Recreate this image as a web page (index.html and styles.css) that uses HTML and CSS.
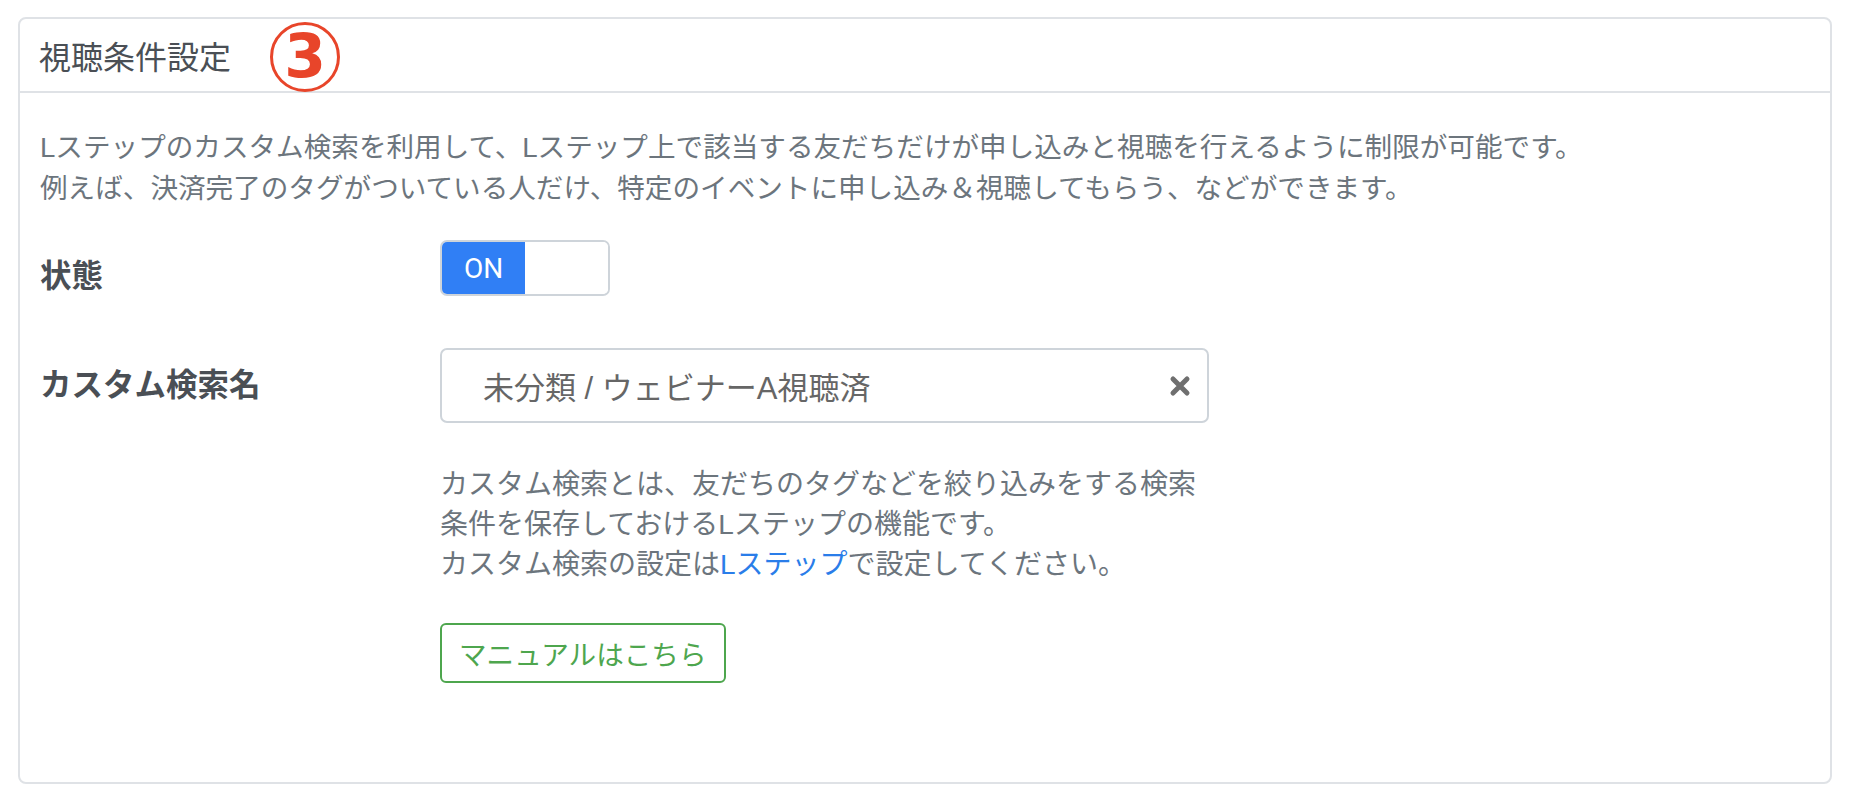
FILE: index.html
```html
<!DOCTYPE html>
<html lang="ja">
<head>
<meta charset="UTF-8"/>
<title>視聴条件設定</title>
<link rel="stylesheet" href="styles.css">
</head>
<body>
<div class="card">
	<div class="cardHeader">
		<span class="cardTitle">視聴条件設定</span>
		<span class="stepMark">3</span>
	</div>
	<div class="cardBody">
		<p class="lead">Lステップのカスタム検索を利用して、Lステップ上で該当する友だちだけが申し込みと視聴を行えるように制限が可能です。<br/>例えば、決済完了のタグがついている人だけ、特定のイベントに申し込み＆視聴してもらう、などができます。</p>

		<div class="formRow stateRow">
			<label class="fieldLabel">状態</label>
			<div class="fieldControl">
				<div class="toggle"><span class="toggleOn">ON</span><span class="toggleOff"></span></div>
			</div>
		</div>

		<div class="formRow searchRow">
			<label class="fieldLabel">カスタム検索名</label>
			<div class="fieldControl">
				<div class="selectBox">
					<span class="selectValue">未分類 / ウェビナーA視聴済</span>
					<svg class="clearIcon" width="22" height="22" viewBox="0 0 22 22"><path d="M4 4 L18 18 M18 4 L4 18" stroke="#6f6f6f" stroke-width="5" stroke-linecap="round" fill="none"/></svg>
				</div>
				<p class="helpText">カスタム検索とは、友だちのタグなどを絞り込みをする検索<br/>条件を保存しておけるLステップの機能です。<br/>カスタム検索の設定は<a href="#">Lステップ</a>で設定してください。</p>
				<a class="manualButton" href="#">マニュアルはこちら</a>
			</div>
		</div>
	</div>
</div>
</body>
</html>
```

FILE: styles.css
```css
html, body { margin: 0; background: #fff; }
body {
	padding: 17px 30px 0 18px;
	font-family: "Liberation Sans", "Noto Sans CJK JP", sans-serif;
	font-size: 27.6px;
	color: #495057;
}
.card {
	box-sizing: border-box;
	width: 1814px;
	height: 767px;
	border: 2px solid #dfe2e6;
	border-radius: 8px;
}
.cardHeader {
	position: relative;
	box-sizing: border-box;
	height: 74px;
	display: flex;
	align-items: center;
	padding: 0 19px;
	border-bottom: 2px solid #dfe2e6;
}
.cardTitle { font-size: 32px; color: #4a4f55; }
.stepMark {
	position: absolute;
	left: 250px;
	top: 3px;
	box-sizing: border-box;
	width: 70px;
	height: 70px;
	border: 3px solid #e8452a;
	border-radius: 50%;
	display: flex;
	align-items: center;
	justify-content: center;
	font-family: "DejaVu Sans", sans-serif;
	font-weight: bold;
	font-size: 60px;
	color: #e8452a;
	line-height: 1;
	padding-bottom: 2px;
}
.cardBody { padding: 34px 20px 30px; }
.lead {
	margin: 0;
	line-height: 41px;
	color: #6c757d;
}
.formRow { display: flex; }
.fieldLabel {
	width: 400px;
	flex: none;
	font-size: 31.5px;
	font-weight: bold;
	line-height: 41px;
	color: #4a4f55;
}
.stateRow { margin-top: 31px; }
.stateRow .fieldLabel { padding-top: 16px; }
.searchRow { margin-top: 51px; }
.searchRow .fieldLabel { padding-top: 17px; }

.toggle {
	box-sizing: border-box;
	width: 170px;
	height: 56px;
	display: flex;
	border: 2px solid #ced4da;
	border-radius: 7px;
	overflow: hidden;
}
.toggleOn {
	width: 83px;
	background: #307ff5;
	color: #fff;
	display: flex;
	align-items: center;
	justify-content: center;
	font-family: "Roboto", "Liberation Sans", sans-serif;
	font-size: 28px;
}
.toggleOff { flex: 1; background: #fff; }

.selectBox {
	box-sizing: border-box;
	width: 769px;
	height: 75px;
	border: 2px solid #ced4da;
	border-radius: 7px;
	display: flex;
	align-items: center;
	padding: 0 16px 0 41px;
}
.selectValue { flex: 1; font-size: 31px; color: #666; }
.clearIcon { flex: none; }

.helpText {
	margin: 42px 0 0;
	font-size: 28px;
	line-height: 40px;
	color: #6c757d;
}
.helpText a { color: #2a7de9; text-decoration: none; }
.manualButton {
	margin-top: 38px;
	box-sizing: border-box;
	height: 60px;
	display: inline-flex;
	align-items: center;
	padding: 0 17px;
	border: 2px solid #4ea64e;
	border-radius: 6px;
	color: #4ea64e;
	text-decoration: none;
}
```
